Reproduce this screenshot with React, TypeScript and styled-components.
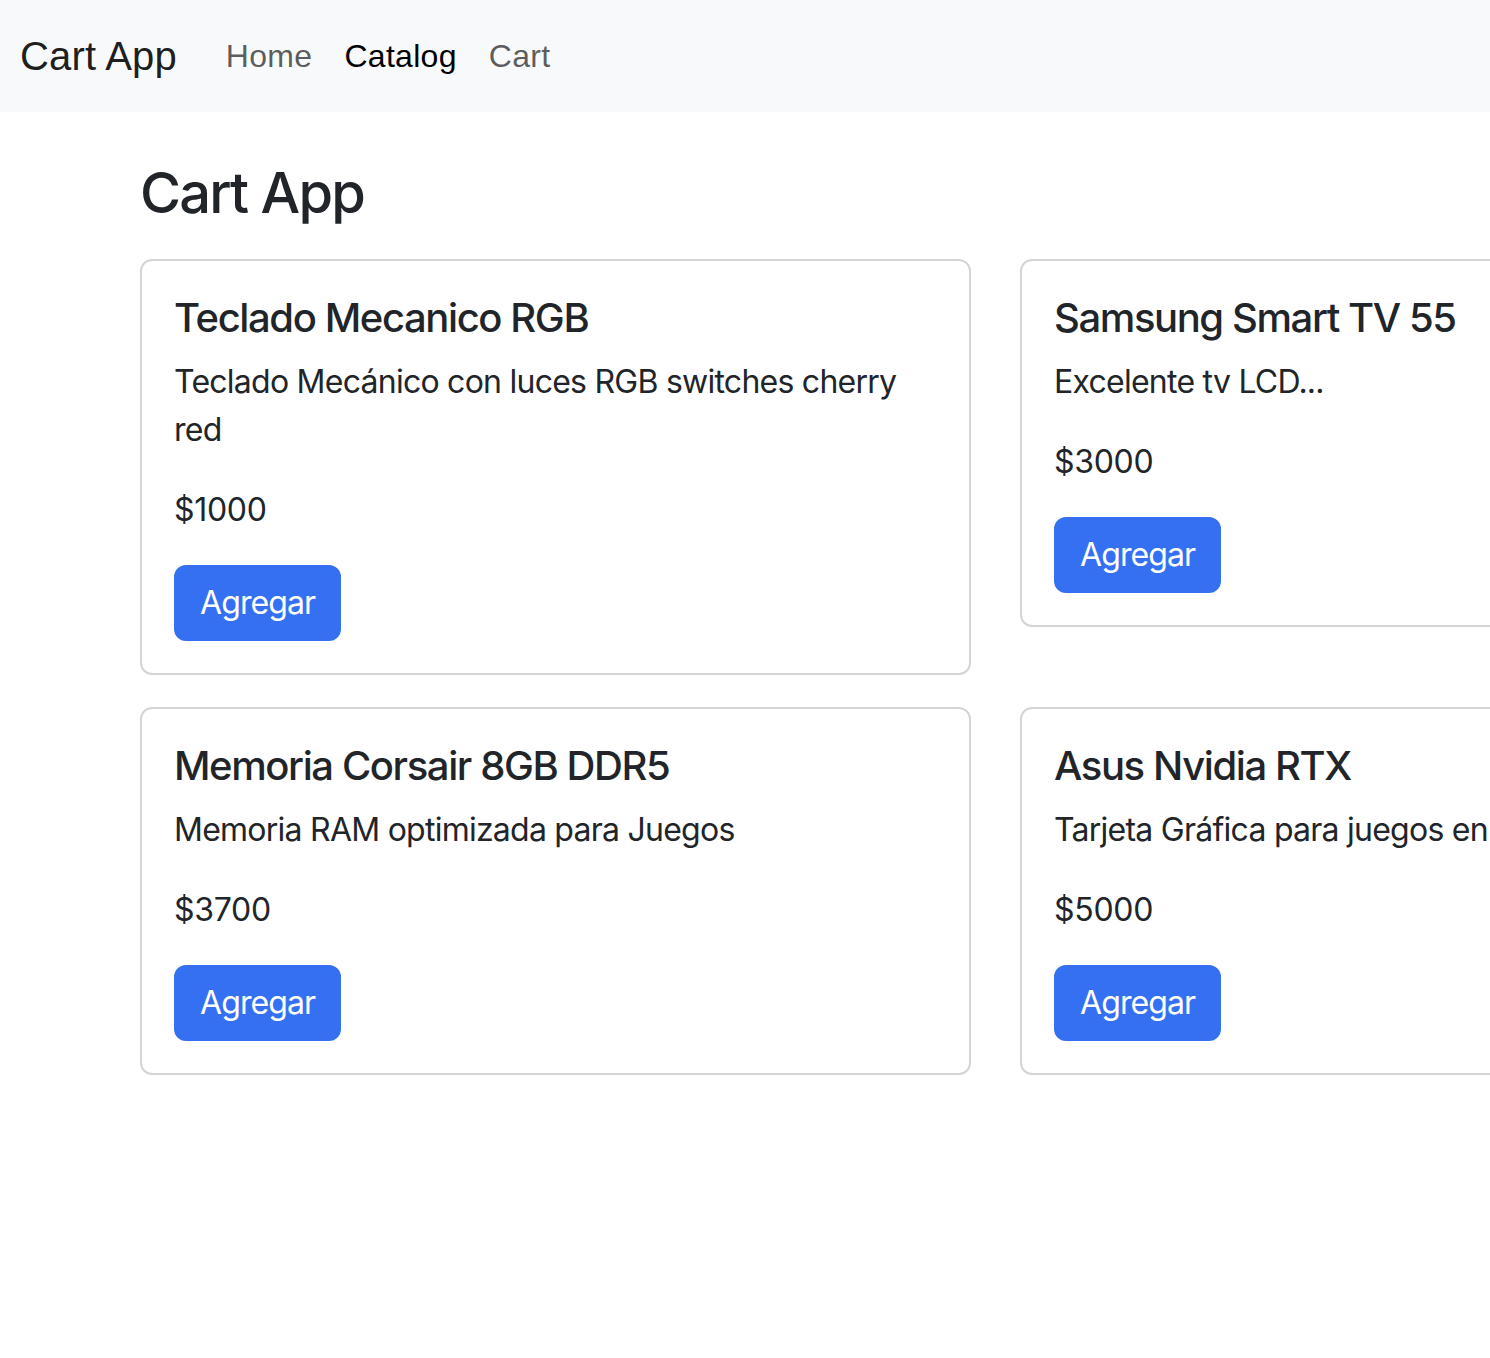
import React from "react";
import styled, { createGlobalStyle } from "styled-components";

const Global = createGlobalStyle`
  html, body { margin: 0; padding: 0; overflow: hidden; background: #fff; }
  body {
    font-family: Inter, "Noto Sans", sans-serif;
    color: #212529;
    font-size: 32px;
    line-height: 1.5;
  }
  * { box-sizing: border-box; }
`;

const NavBar = styled.nav`
  display: flex;
  align-items: center;
  height: 112px;
  padding: 16px 20px;
  background: #f8f9fa;
  font-family: "Liberation Sans", Arial, sans-serif;
`;

const Brand = styled.a`
  font-size: 40px;
  line-height: 60px;
  padding: 10px 0;
  margin-right: 33px;
  color: rgba(0, 0, 0, 0.9);
  text-decoration: none;
  letter-spacing: 0.15px;
`;

const NavList = styled.div`
  display: flex;
  align-items: center;
`;

const NavLink = styled.a<{ $active?: boolean }>`
  font-size: 32px;
  line-height: 48px;
  padding: 16px;
  color: ${(p) => (p.$active ? "rgba(0,0,0,1)" : "rgba(0,0,0,0.65)")};
  text-decoration: none;
  letter-spacing: 0.3px;
`;

const Main = styled.main`
  padding: 48px 0 0 140px;
`;

const Title = styled.h3`
  margin: 0 0 32px;
  font-size: 56px;
  font-weight: 500;
  line-height: 1.2;
  letter-spacing: -1.8px;
`;

const Grid = styled.div`
  display: grid;
  grid-template-columns: 831px 831px;
  column-gap: 49px;
  row-gap: 32px;
  align-items: start;
  width: 1711px;
`;

const Card = styled.div`
  border: 2px solid #d5d5d5;
  border-radius: 12px;
  padding: 32px;
  background: #fff;
`;

const CardTitle = styled.h5`
  margin: 0 0 16px;
  padding-top: 1px;
  font-size: 40px;
  font-weight: 500;
  line-height: 1.2;
  letter-spacing: -1.4px;
`;

const Text = styled.p`
  margin: 0 0 32px;
  font-size: 32px;
  line-height: 48px;
  letter-spacing: -0.75px;
`;

const Price = styled(Text)`
  letter-spacing: -0.3px;
  margin-bottom: 31px;
`;

const Button = styled.button`
  display: inline-block;
  font-family: Inter, "Noto Sans", sans-serif;
  font-size: 32px;
  line-height: 48px;
  padding: 12px 24px;
  border: 2px solid #3570f3;
  border-radius: 12px;
  background: #3570f3;
  color: #fff;
  cursor: pointer;
  letter-spacing: -0.9px;
`;

const products = [
  { name: "Teclado Mecanico RGB", description: "Teclado Mecánico con luces RGB switches cherry red", price: 1000 },
  { name: "Samsung Smart TV 55", description: "Excelente tv LCD...", price: 3000 },
  { name: "Memoria Corsair 8GB DDR5", description: "Memoria RAM optimizada para Juegos", price: 3700 },
  { name: "Asus Nvidia RTX", description: "Tarjeta Gráfica para juegos en 4K", price: 5000 },
];

export default function App() {
  return (
    <>
      <Global />
      <NavBar>
        <Brand href="#">Cart App</Brand>
        <NavList>
          <NavLink href="#">Home</NavLink>
          <NavLink href="#" $active>Catalog</NavLink>
          <NavLink href="#">Cart</NavLink>
        </NavList>
      </NavBar>
      <Main>
        <Title>Cart App</Title>
        <Grid>
          {products.map((p) => (
            <Card key={p.name}>
              <CardTitle>{p.name}</CardTitle>
              <Text>{p.description}</Text>
              <Price>${p.price}</Price>
              <Button>Agregar</Button>
            </Card>
          ))}
        </Grid>
      </Main>
    </>
  );
}
